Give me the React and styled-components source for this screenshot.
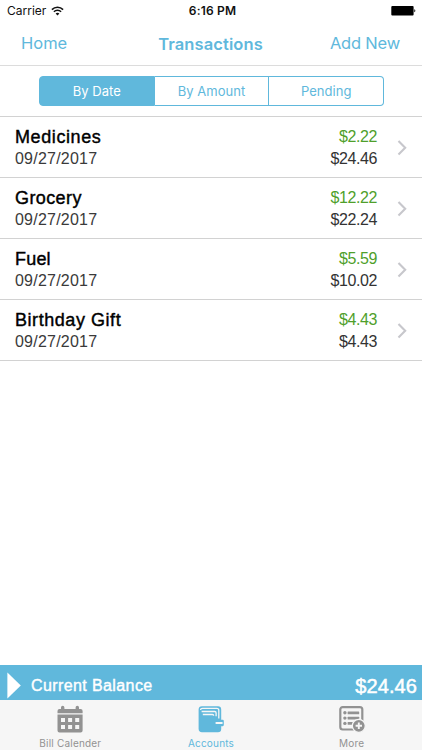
import React, { useState } from 'react';
import styled, { createGlobalStyle } from 'styled-components';

const BLUE = '#60b8dc';
const GRAY = '#929292';

const GlobalStyle = createGlobalStyle`
  * {
    box-sizing: border-box;
  }
  body {
    margin: 0;
    background: #fff;
  }
  button {
    margin: 0;
    padding: 0;
    border: 0;
    background: none;
    font-family: inherit;
    cursor: pointer;
  }
`;

const Screen = styled.div`
  display: flex;
  flex-direction: column;
  width: 422px;
  height: 750px;
  overflow: hidden;
  font-family: Inter, "Liberation Sans", sans-serif;
  white-space: nowrap;
`;

const StatusBar = styled.div`
  display: grid;
  grid-template-columns: 1fr auto 1fr;
  align-items: center;
  height: 22px;
  padding: 0 6px 0 7px;
  font-size: 12px;
  line-height: 22px;
  color: #111;
  .carrier {
    display: flex;
    align-items: center;
    gap: 5px;
  }
  .time {
    padding-left: 2px;
    font-weight: 600;
    letter-spacing: 0.2px;
  }
  .battery {
    justify-self: end;
  }
`;

const NavBar = styled.div`
  display: grid;
  grid-template-columns: 1fr auto 1fr;
  align-items: center;
  height: 44px;
  padding: 0 22px 0 21px;
  border-bottom: 1px solid #dcdcdc;
  h1 {
    margin: 0;
    font-size: 16.5px;
    font-weight: 600;
    letter-spacing: 0.1px;
    color: ${BLUE};
  }
`;

const NavButton = styled.button`
  justify-self: ${({ $side }) => $side};
  margin-top: -1px;
  font-size: 16.5px;
  letter-spacing: ${({ $spacing }) => $spacing}px;
  color: ${BLUE};
`;

const Segments = styled.div`
  display: flex;
  flex: none;
  height: 51px;
  padding: 10px 38px 10px 39px;
  border-bottom: 1px solid #d2d2d2;
`;

const Segment = styled.button`
  flex: 1;
  border: 1px solid ${BLUE};
  border-left-width: ${({ $first }) => ($first ? 1 : 0)}px;
  border-radius: ${({ $first, $last }) => ($first ? '4px 0 0 4px' : $last ? '0 4px 4px 0' : 0)};
  background: ${({ $active }) => ($active ? BLUE : '#fff')};
  color: ${({ $active }) => ($active ? '#fff' : BLUE)};
  font-size: 13px;
  letter-spacing: 0.05px;
`;

const List = styled.ul`
  flex: 1;
  margin: 0;
  padding: 0;
  list-style: none;
  font-family: "Liberation Sans", Arial, sans-serif;
`;

const Row = styled.li`
  display: flex;
  align-items: center;
  height: 61px;
  padding: 2px 15px 0;
  border-bottom: 1px solid #d2d2d2;
  .info {
    flex: 1;
  }
  .name {
    font-size: 18px;
    line-height: 22px;
    color: #000;
    -webkit-text-stroke: 0.4px #000;
    letter-spacing: ${({ $spacing }) => $spacing}px;
  }
  .date {
    font-size: 16px;
    line-height: 22px;
    letter-spacing: 0.22px;
    color: #3a3a3a;
  }
  .amounts {
    margin-right: 20px;
    font-size: 16px;
    line-height: 22px;
    letter-spacing: -0.4px;
    text-align: right;
    color: #333;
  }
  .amount {
    color: #4f9f2b;
  }
`;

const BalanceBar = styled.div`
  display: flex;
  align-items: center;
  flex: none;
  height: 35px;
  padding: 5px 5px 0 7px;
  background: ${BLUE};
  color: #fff;
  font-family: "Liberation Sans", Arial, sans-serif;
  svg {
    margin-right: 10px;
  }
  .label {
    flex: 1;
    padding-top: 1px;
    font-size: 16px;
    letter-spacing: 0.4px;
    -webkit-text-stroke: 0.4px #fff;
  }
  .total {
    padding-top: 2px;
    font-size: 20px;
    letter-spacing: 0.1px;
    -webkit-text-stroke: 0.5px #fff;
  }
`;

const TabBar = styled.div`
  display: flex;
  flex: none;
  height: 50px;
  background: #f6f6f6;
`;

const Tab = styled.button`
  display: flex;
  flex: 1;
  flex-direction: column;
  align-items: center;
  padding-top: 5px;
  color: ${({ $active }) => ($active ? BLUE : GRAY)};
  font-size: 10px;
  letter-spacing: 0.2px;
  span {
    margin-top: 4px;
    line-height: 12px;
  }
`;

const WifiIcon = () => (
  <svg width="13" height="10" viewBox="0 0 13 10" fill="none" stroke="#111" strokeWidth="1.6">
    <path d="M0.9 3.6a8 8 0 0 1 11.2 0" />
    <path d="M2.9 5.8a5.1 5.1 0 0 1 7.2 0" />
    <path d="M6.5 9.6L4.6 7.6a2.7 2.7 0 0 1 3.8 0z" fill="#111" stroke="none" />
  </svg>
);

const BatteryIcon = () => (
  <svg className="battery" width="25" height="10" viewBox="0 0 25 10">
    <rect x="0.3" y="0" width="22.3" height="9.6" rx="1" fill="#000" />
    <path d="M23.3 3.3a1.6 1.6 0 0 1 0 3z" fill="#000" />
  </svg>
);

const Chevron = () => (
  <svg width="10" height="16" viewBox="0 0 10 16" fill="none" stroke="#c7c7cc" strokeWidth="2.1">
    <path d="M1.5 0.9L8.2 7.7l-6.7 6.8" />
  </svg>
);

const CalendarIcon = () => (
  <svg width="28" height="28" viewBox="0 0 28 28">
    <path
      fill={GRAY}
      fillRule="evenodd"
      d="M1.5 8.2V6a2 2 0 0 1 2-2H5V2.4a1.6 1.6 0 0 1 3.4 0V4h11.2V2.4a1.6 1.6 0 0 1 3.4 0V4h1.6a2 2 0 0 1 2 2v2.2zM1.5 9.6h25.1v16a2 2 0 0 1-2 2H3.5a2 2 0 0 1-2-2zM5 13v4h4v-4zM12.1 13v4h4v-4zM19.2 13v4h4v-4zM5 20v4h4v-4zM12.1 20v4h4v-4zM19.2 20v4h4v-4z"
    />
  </svg>
);

const WalletIcon = () => (
  <svg width="28" height="28" viewBox="0 0 28 28">
    <path
      fill={BLUE}
      d="M5 1.2h16a3.2 3.2 0 0 1 3.2 3.2v10.4h1.5a1.1 1.1 0 0 1 1.1 1.1v4.2a1.1 1.1 0 0 1-1.1 1.1h-1.5v2.8a3.2 3.2 0 0 1-3.2 3.2H5a3.4 3.4 0 0 1-3.4-3.4V4.6A3.4 3.4 0 0 1 5 1.2z"
    />
    <g fill="none" stroke="#f6f6f6" strokeWidth="1.3">
      <path d="M3.6 5c0-1 .8-1.7 1.9-1.7h14.3a2 2 0 0 1 2 2v8.2" />
      <path d="M4.6 6.5h13.1a1.4 1.4 0 0 1 1.4 1.4v3.4" />
      <path d="M5.8 9.5h9.6a1.4 1.4 0 0 1 1.3 1.3" />
    </g>
    <rect x="18.4" y="17" width="7.4" height="2" rx="1" fill="#f6f6f6" />
  </svg>
);

const MoreIcon = () => (
  <svg width="28" height="28" viewBox="0 0 28 28">
    <rect x="2.3" y="2.1" width="22" height="22.4" rx="2.4" fill="none" stroke={GRAY} strokeWidth="2.2" />
    <g fill={GRAY}>
      <circle cx="6.9" cy="7.8" r="1.7" />
      <circle cx="6.9" cy="13.1" r="1.7" />
      <circle cx="6.9" cy="18.4" r="1.7" />
      <rect x="9.6" y="6.4" width="11.6" height="2.8" rx="0.5" />
      <rect x="9.6" y="11.7" width="11.6" height="2.8" rx="0.5" />
      <rect x="9.6" y="17" width="6" height="2.8" rx="0.5" />
    </g>
    <circle cx="20.8" cy="20.8" r="6.5" fill={GRAY} stroke="#f6f6f6" strokeWidth="1.3" />
    <path d="M20.8 17.6v6.4M17.6 20.8h6.4" stroke="#f6f6f6" strokeWidth="1.9" />
  </svg>
);

const segments = ['By Date', 'By Amount', 'Pending'];

const transactions = [
  { name: 'Medicines', date: '09/27/2017', amount: '$2.22', balance: '$24.46', spacing: 0.6 },
  { name: 'Grocery', date: '09/27/2017', amount: '$12.22', balance: '$22.24', spacing: 0.4 },
  { name: 'Fuel', date: '09/27/2017', amount: '$5.59', balance: '$10.02', spacing: 0.2 },
  { name: 'Birthday Gift', date: '09/27/2017', amount: '$4.43', balance: '$4.43', spacing: 0.55 },
];

const tabs = [
  { label: 'Bill Calender', Icon: CalendarIcon },
  { label: 'Accounts', Icon: WalletIcon },
  { label: 'More', Icon: MoreIcon },
];

const App = () => {
  const [segment, setSegment] = useState(0);
  const [tab, setTab] = useState(1);

  return (
    <Screen>
      <GlobalStyle />
      <StatusBar>
        <div className="carrier">
          Carrier
          <WifiIcon />
        </div>
        <div className="time">6:16 PM</div>
        <BatteryIcon />
      </StatusBar>
      <NavBar>
        <NavButton $side="start" $spacing={0}>Home</NavButton>
        <h1>Transactions</h1>
        <NavButton $side="end" $spacing={-0.2}>Add New</NavButton>
      </NavBar>
      <Segments>
        {segments.map((label, id) => (
          <Segment
            key={label}
            $active={segment === id}
            $first={id === 0}
            $last={id === segments.length - 1}
            onClick={() => setSegment(id)}
          >
            {label}
          </Segment>
        ))}
      </Segments>
      <List>
        {transactions.map(({ name, date, amount, balance, spacing }) => (
          <Row key={name} $spacing={spacing}>
            <div className="info">
              <div className="name">{name}</div>
              <div className="date">{date}</div>
            </div>
            <div className="amounts">
              <div className="amount">{amount}</div>
              <div>{balance}</div>
            </div>
            <Chevron />
          </Row>
        ))}
      </List>
      <BalanceBar>
        <svg width="14" height="27" viewBox="0 0 14 27">
          <path d="M0.4 0.5L13.8 13.5L0.4 26.5z" fill="#fff" />
        </svg>
        <div className="label">Current Balance</div>
        <div className="total">$24.46</div>
      </BalanceBar>
      <TabBar>
        {tabs.map(({ label, Icon }, id) => (
          <Tab key={label} $active={tab === id} onClick={() => setTab(id)}>
            <Icon />
            <span>{label}</span>
          </Tab>
        ))}
      </TabBar>
    </Screen>
  );
};

export default App;
